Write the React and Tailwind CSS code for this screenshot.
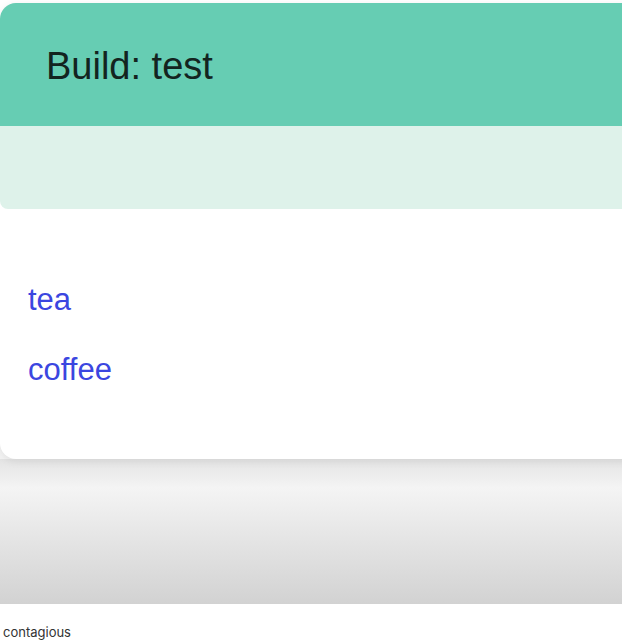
import React from 'react';

const items = ['tea', 'coffee'];

function App() {
    return (
        <div className="w-[622px] h-[643px] bg-white overflow-hidden" style={{ fontFamily: '"Liberation Sans", Arial, sans-serif' }}>
            <div className="pt-[3px] bg-gradient-to-b from-white from-70% to-[#f3f3f3]">
                <div className="relative z-10 w-[640px] rounded-l-2xl overflow-hidden bg-white shadow-[0_2px_8px_rgba(0,0,0,0.08)]">
                    <div className="h-[123px] bg-[#66cdb3] flex items-center pl-[46px]">
                        <h1 className="text-[38px] leading-none text-[#13241f] mt-[2px]">Build: test</h1>
                    </div>
                    <div className="h-[83px] bg-[#def2ea] rounded-bl-lg"></div>
                    <div className="h-[250px] pt-[73px] pl-[28px] flex flex-col gap-[35px]">
                        {items.map(item => (
                            <a key={item} href="#" className="text-[31px] leading-[35px] text-[#3b46e0]">{item}</a>
                        ))}
                    </div>
                </div>
            </div>
            <div className="h-[145px] bg-gradient-to-b from-[#e4e4e4] via-[#f4f4f4] via-20% to-[#d2d2d2]"></div>
            <div className="pt-[22px] pl-[3px] text-[13px] leading-none text-[#333]" style={{ fontFamily: 'Inter, "Liberation Sans", sans-serif' }}>contagious</div>
        </div>
    );
}

export default App;
